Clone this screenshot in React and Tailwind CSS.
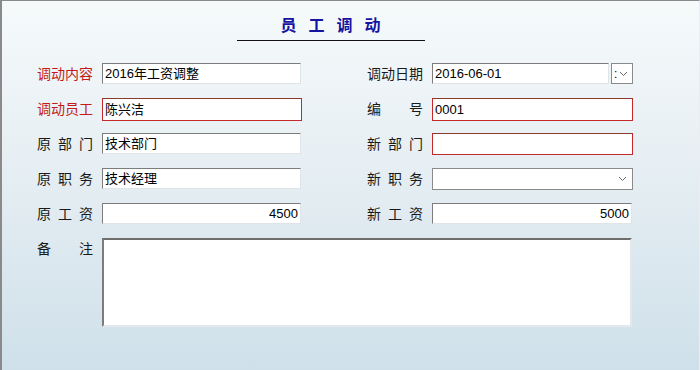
import React from 'react';

const font = { fontFamily: '"Liberation Sans", "Noto Sans CJK SC", sans-serif' };

function Label({ text, red }) {
  const chars = text.split('');
  return (
    <div
      className={`w-[56px] h-[21px] flex items-center justify-between text-[14px] leading-none ${
        red ? 'text-[#c41a1a]' : 'text-[#1a1a1a]'
      }`}
    >
      {chars.map((c, i) => (
        <span key={i}>{c}</span>
      ))}
    </div>
  );
}

function Input({ value, required, right, className = '' }) {
  return (
    <div
      className={`h-[21px] bg-white flex items-center text-[13px] leading-none text-black px-[2px] ${
        required
          ? 'border border-[#c42a2a] border-t-[#8a3a2a]'
          : 'border border-t-[#7c7c7c] border-l-[#7c7c7c] border-b-[#dfe4e8] border-r-[#dfe4e8]'
      } ${right ? 'justify-end' : ''} ${className}`}
    >
      {value}
    </div>
  );
}

function Chevron({ className = '' }) {
  return (
    <svg width="9" height="6" viewBox="0 0 9 6" className={className}>
      <path d="M1 1 L4.5 4.5 L8 1" fill="none" stroke="#6a6a6a" strokeWidth="1" />
    </svg>
  );
}

function Row({ children }) {
  return <div className="h-[35px] flex items-start">{children}</div>;
}

export default function App() {
  return (
    <div
      style={font}
      className="w-[700px] h-[370px] border-l-2 border-t border-[#8a8a8a] border-r border-r-[#e8eef2] bg-gradient-to-b from-[#f6fafb] via-[#e4edf2] to-[#cfe0ea]"
    >
      <div className="h-[62px] flex flex-col items-center pt-[15px] pr-[40px]">
        <div
          style={{ fontFamily: '"Noto Sans CJK SC", sans-serif' }}
          className="text-[16px] font-bold text-[#1414a0] tracking-[12px] leading-none pl-[12px]"
        >
          员工调动
        </div>
        <div className="w-[188px] h-px bg-[#111] mt-[8px]" />
      </div>

      <div className="pl-[35px]">
        <Row>
          <div className="flex items-start w-[330px]">
            <Label text="调动内容" red />
            <Input value="2016年工资调整" className="w-[199px] ml-[9px]" />
          </div>
          <div className="flex items-start">
            <Label text="调动日期" />
            <Input value="2016-06-01" className="w-[177px] ml-[9px]" />
            <div className="ml-[2px] w-[22px] h-[21px] border border-[#8a8a8a] bg-white flex items-center pl-[2px] gap-[2px]">
              <span className="text-[12px] leading-none text-black">:</span>
              <Chevron />
            </div>
          </div>
        </Row>
        <Row>
          <div className="flex items-start w-[330px]">
            <Label text="调动员工" red />
            <Input value="陈兴洁" required className="w-[200px] ml-[9px] h-[23px]" />
          </div>
          <div className="flex items-start">
            <Label text="编号" />
            <Input value="0001" required className="w-[201px] ml-[9px] h-[23px]" />
          </div>
        </Row>
        <Row>
          <div className="flex items-start w-[330px]">
            <Label text="原部门" />
            <Input value="技术部门" className="w-[199px] ml-[9px]" />
          </div>
          <div className="flex items-start">
            <Label text="新部门" />
            <Input value="" required className="w-[201px] ml-[9px] h-[22px]" />
          </div>
        </Row>
        <Row>
          <div className="flex items-start w-[330px]">
            <Label text="原职务" />
            <Input value="技术经理" className="w-[199px] ml-[9px]" />
          </div>
          <div className="flex items-start">
            <Label text="新职务" />
            <div className="w-[201px] ml-[9px] h-[22px] bg-white border border-[#8a8a8a] flex items-center justify-end pr-[5px]">
              <Chevron />
            </div>
          </div>
        </Row>
        <Row>
          <div className="flex items-start w-[330px]">
            <Label text="原工资" />
            <Input value="4500" right className="w-[199px] ml-[9px]" />
          </div>
          <div className="flex items-start">
            <Label text="新工资" />
            <Input value="5000" right className="w-[200px] ml-[9px]" />
          </div>
        </Row>
        <div className="flex items-start">
          <Label text="备注" />
          <div className="ml-[9px] w-[530px] h-[89px] bg-white border-2 border-t-[#6e6e6e] border-l-[#7c7c7c] border-b-[#e2e8ec] border-r-[#e2e8ec]" />
        </div>
      </div>
    </div>
  );
}
